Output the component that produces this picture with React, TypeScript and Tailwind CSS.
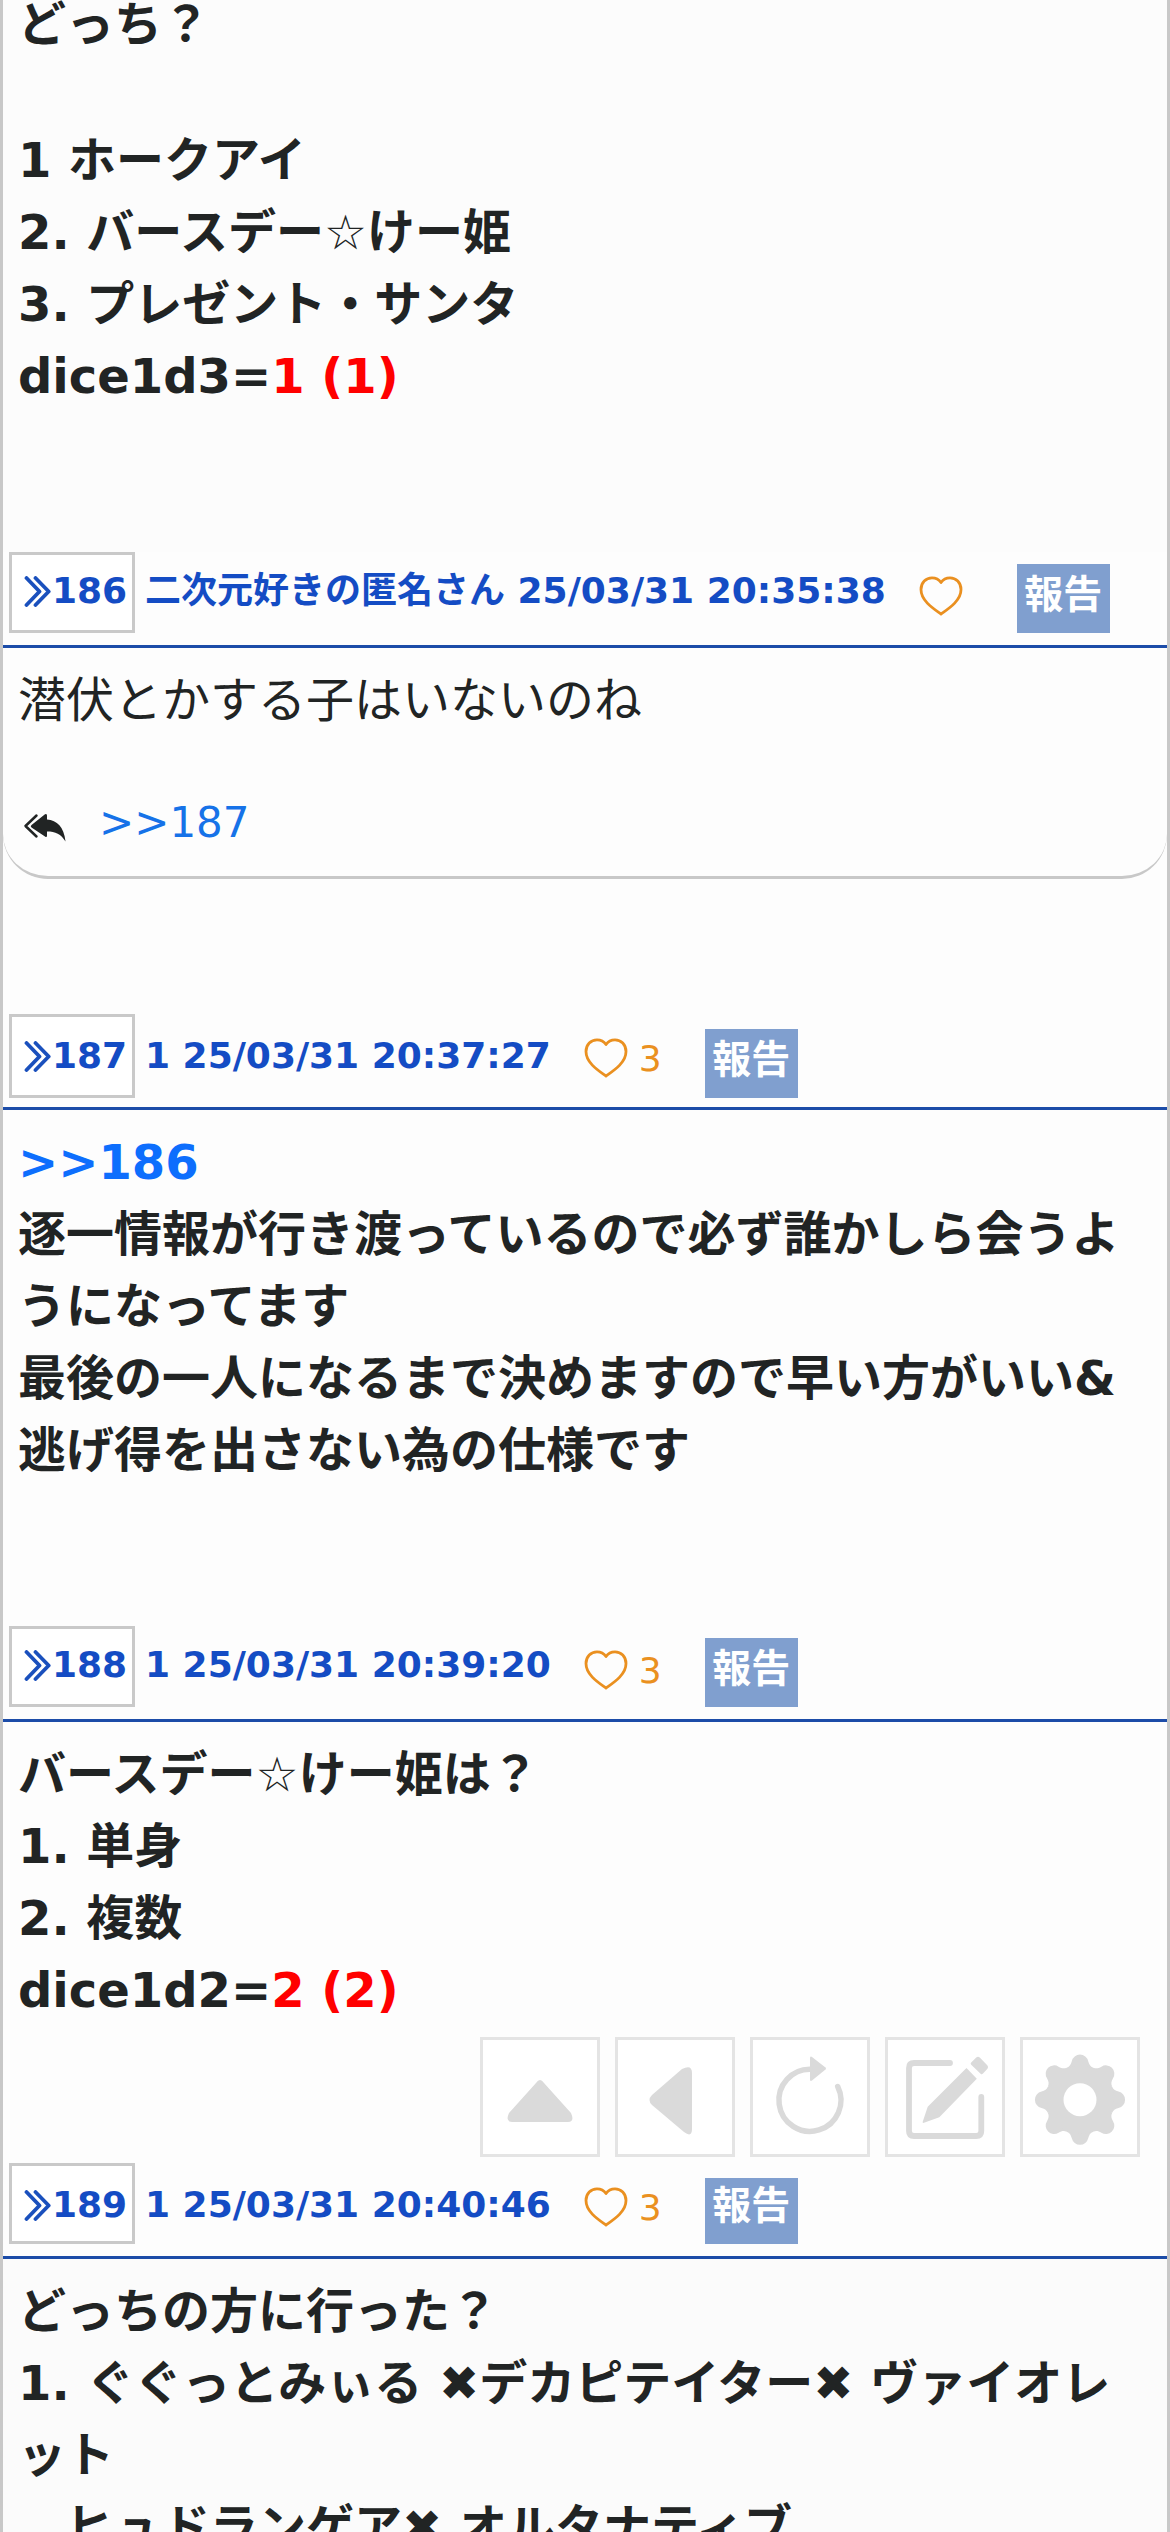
import React from "react";

const ink = "text-[#212424]";

function Chevrons() {
  return (
    <svg className="h-[31px] w-[27px] shrink-0" viewBox="0 0 27 31" fill="none" stroke="#1a50bd" strokeWidth="3.800" strokeLinecap="round" strokeLinejoin="round">
      <path d="M2.500 2 L15.500 15.500 L2.500 29" />
      <path d="M11.500 2 L24.700 15.500 L11.500 29" />
    </svg>
  );
}

function Heart() {
  return (
    <svg className="mt-6 h-10 w-[44px] shrink-0" viewBox="0 0 44 40" fill="none" stroke="#ea9020" strokeWidth="2.8" strokeLinejoin="round">
      <path d="M22 38 C15 33 2 25 2 13.500 C2 6.500 7 1.800 13 1.800 C17 1.800 20 3.500 22 6.500 C24 3.500 27 1.800 31 1.800 C37 1.800 42 6.500 42 13.500 C42 25 29 33 22 38 Z" />
    </svg>
  );
}

function ReplyAll() {
  return (
    <svg className="h-[30px] w-[44px] shrink-0" viewBox="0 0 44 30">
      <path d="M13.500 3.500 L2.500 14 L13.500 24.500" fill="none" stroke="#212424" strokeWidth="2.500" strokeLinecap="round" strokeLinejoin="round" />
      <path d="M8.500 13 L22 2.200 Q24 1.200 24 3.500 V7.500 C34 8.500 41 14.500 42.500 29.500 C38 22 32.500 19.500 24 19.500 V23.500 Q24 26 22 24.600 L8.500 15.500 Q7 14.200 8.500 13 Z" fill="#212424" />
    </svg>
  );
}

type HeaderProps = {
  no: number;
  label: string;
  likes?: number;
  box: string;
  textTop: string;
  button: string;
};

function PostHeader({ no, label, likes, box, textTop, button }: HeaderProps) {
  return (
    <header className="flex h-[96px] items-start border-b-[3px] border-[#1c4ca8] pl-[6px] text-[36px] font-bold leading-[42px] text-[#144cc4]">
      <div className={`w-[126px] shrink-0 border-[3px] border-[#c9c9c9] bg-white ${box}`}>
        <a className={`-mt-[3px] flex items-center pl-3 ${textTop}`}>
          <Chevrons />
          <span className="-mr-2 pl-px">{no}</span>
        </a>
      </div>
      <div className={`whitespace-pre pl-[10px] ${textTop}`}>{label}</div>
      <div className={`flex shrink-0 pl-[33px] font-normal text-[#ea9020] ${likes === undefined ? "w-[131px]" : "w-[154px]"}`}>
        <Heart />
        {likes !== undefined && <span className="mt-6 pl-[11px]">{likes}</span>}
      </div>
      <button className={`w-[93px] shrink-0 bg-[#809fcf] text-center text-[39px] font-bold text-white ${button}`}>報告</button>
    </header>
  );
}

function Line({ children }: { children?: React.ReactNode }) {
  return <p className="h-[72px] whitespace-pre">{children}</p>;
}

const Dice = ({ children }: { children: React.ReactNode }) => <span className="text-[#ff0000]">{children}</span>;

function ToolButton({ children }: { children: React.ReactNode }) {
  return (
    <button className="size-[120px] border-[3px] border-[#e4e4e4] bg-white text-[#dadada]">
      <svg className="size-[114px]" viewBox="3 3 114 114" fill="currentColor">
        {children}
      </svg>
    </button>
  );
}

const toothPath =
  "M0 0 L-13.280 -32.060 C-10.280 -33.260 -9.200 -35 -8.200 -38.500 A8.400 8.400 0 0 1 8.200 -38.500 C9.200 -35 10.280 -33.260 13.280 -32.060 Z";

function Toolbar() {
  return (
    <nav className="absolute left-[477px] top-[2037px] flex gap-[15px]">
      <ToolButton>
        <path d="M56 46 Q60 40 64 46 L91 76 Q95 85 88 85 H32 Q25 85 29 76 Z" />
      </ToolButton>
      <ToolButton>
        <path d="M67 32 Q77 27 77 36 V92 Q77 101 69 95 L37 68 Q32 63 37 58 Z" />
      </ToolButton>
      <ToolButton>
        <path d="M61 32.300 A31 31 0 1 0 87.700 49.500" fill="none" stroke="currentColor" strokeWidth="5.500" strokeLinecap="round" />
        <path d="M60 20.500 Q60.500 19 62 20 L75.500 30.500 Q76.500 31.500 75.500 32.500 L62 43.500 Q60.500 44.500 60 43 Z" />
      </ToolButton>
      <ToolButton>
        <path d="M65 26 H29 Q24 26 24 31 V94 Q24 99 29 99 H91.300 Q96.300 99 96.300 94 V60" fill="none" stroke="currentColor" strokeWidth="5.800" strokeLinecap="round" />
        <path d="M81.500 31 L91.800 41.700 L54.300 80.300 L39 85.800 Q37 86.200 37.800 84.500 L42.700 69.700 Z" />
        <path d="M86.200 27.800 Q85 26.600 86.200 25.400 L91 20.800 Q93 18.900 95 20.800 L102 27.900 Q104 30 102 32.300 L98 36.600 Q96.800 38 95.600 36.800 Z" />
      </ToolButton>
      <ToolButton>
        <g transform="translate(60 62.700)">
          {[0, 45, 90, 135, 180, 225, 270, 315].map((angle) => (
            <path key={angle} d={toothPath} transform={`rotate(${angle})`} />
          ))}
          <circle r="34" />
          <circle r="16.500" fill="white" />
        </g>
      </ToolButton>
    </nav>
  );
}

export default function App() {
  return (
    <div lang="ja" className={`relative h-[2532px] w-[1170px] overflow-hidden border-x-[3px] border-[#c8c8c8] bg-[#fdfdfd] font-['DejaVu_Sans','Noto_Sans_CJK_JP',sans-serif] text-[48px] leading-[72px] ${ink}`}>
      <article className="h-[552px] bg-[#fcfcfc] pl-[15px] font-bold">
        <div className="-mt-[12px] inline-block">
          <Line>どっち？</Line>
          <div className="h-16" />
          <Line>1 ホークアイ</Line>
          <Line>2. バースデー☆けー姫</Line>
          <Line>3. プレゼント・サンタ</Line>
          <Line>dice1d3=<Dice>1 (1)</Dice></Line>
        </div>
      </article>

      <article className="h-[462px]">
        <PostHeader no={186} label="二次元好きの匿名さん 25/03/31 20:35:38" box="h-[81px]" textTop="pt-[18px]" button="mt-3 h-[69px] pb-[7px]" />
        <div className="h-[231px] rounded-b-[45px] border-b-[3px] border-[#c8c8c8] pl-[15px] pt-4">
          <Line>潜伏とかする子はいないのね</Line>
          <div className="mt-[63px] flex h-12 items-center gap-8 pl-[5px] text-[42px] leading-[48px]">
            <div className="pt-[7px]"><ReplyAll /></div>
            <a className="text-[#1672e8]">&gt;&gt;187</a>
          </div>
        </div>
      </article>

      <article className="h-[612px]">
        <PostHeader no={187} label="1 25/03/31 20:37:27" likes={3} box="h-[84px]" textTop="pt-[21px]" button="mt-[15px] h-[69px] pb-[7px]" />
        <div className="pl-[15px] pt-4 font-bold">
          <Line><a className="text-[#0d6efd]">&gt;&gt;186</a></Line>
          <Line>逐一情報が行き渡っているので必ず誰かしら会うよ</Line>
          <Line>うになってます</Line>
          <Line>最後の一人になるまで決めますので早い方がいい&amp;</Line>
          <Line>逃げ得を出さない為の仕様です</Line>
        </div>
      </article>

      <article className="h-[537px]">
        <PostHeader no={188} label="1 25/03/31 20:39:20" likes={3} box="h-[81px]" textTop="pt-[18px]" button="mt-3 h-[69px] pb-[7px]" />
        <div className="pl-[15px] pt-4 font-bold">
          <Line>バースデー☆けー姫は？</Line>
          <Line>1. 単身</Line>
          <Line>2. 複数</Line>
          <Line>dice1d2=<Dice>2 (2)</Dice></Line>
        </div>
      </article>

      <article>
        <PostHeader no={189} label="1 25/03/31 20:40:46" likes={3} box="h-[81px]" textTop="pt-[21px]" button="mt-[15px] h-[66px] pb-[10px]" />
        <div className="bg-[#fbfbfb] pl-[15px] pt-4 font-bold">
          <Line>どっちの方に行った？</Line>
          <Line>1. ぐぐっとみぃる ✖デカピテイター✖ ヴァイオレ</Line>
          <Line>ット</Line>
          <Line>　ヒュドランゲア✖ オルタナティブ</Line>
        </div>
      </article>

      <Toolbar />
    </div>
  );
}
